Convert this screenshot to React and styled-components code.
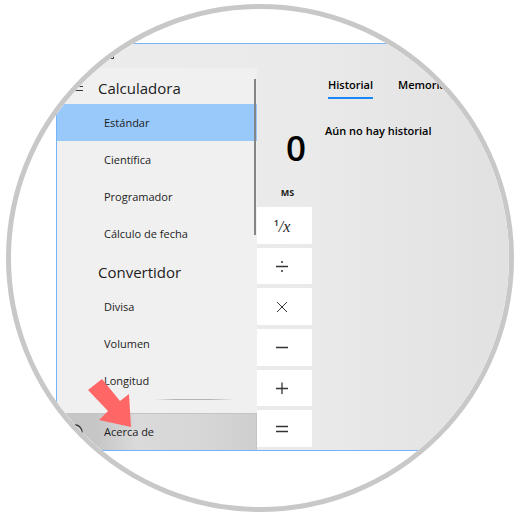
import React from 'react'
import styled, { createGlobalStyle } from 'styled-components'

const colors = {
  text: '#1c1c1c',
  dark: '#000000',
  accent: '#1a86f8',
  selected: '#99c9fb',
  outline: '#74b5f8',
  ring: '#c8c8c8',
  panel: '#f0f0f0',
  arrow: '#ff6666',
}

const GlobalStyle = createGlobalStyle`
  * { box-sizing: border-box; }
  body { margin: 0; background: #ffffff; }
  button { border: 0; margin: 0; padding: 0; background: none; font: inherit; color: inherit; }
  svg { display: block; }
`

const Page = styled.main`
  padding: 4px 6px;
  font-family: 'Open Sans', 'Noto Sans', sans-serif;
  font-size: 11px;
  line-height: 16px;
  color: ${colors.text};
`

const Lens = styled.div`
  width: 100%;
  aspect-ratio: 1;
  padding: 34px 0 0 45px;
  border: 5px solid ${colors.ring};
  border-radius: 50%;
  overflow: hidden;
`

const Window = styled.div`
  display: flex;
  flex-direction: column;
  border: 1px solid ${colors.outline};
  border-right: 0;
  background: linear-gradient(90deg, #ececec 0%, #eaeaea 55%, #e1e1e1 100%);
`

const TitleBar = styled.header`
  height: 24px;
  padding: 4px 0 0 46px;
`

const Body = styled.div`
  display: flex;
`

const Sidebar = styled.nav`
  position: relative;
  display: flex;
  flex-direction: column;
  flex: 0 0 200px;
  background: ${colors.panel};
`

const Modes = styled.div`
  flex: 1;
`

const Heading = styled.h2`
  display: flex;
  align-items: center;
  height: 36px;
  margin: 0;
  padding-top: 4px;
  font-size: 15px;
  font-weight: 400;
  line-height: 20px;
`

const IconSlot = styled.span`
  display: flex;
  justify-content: center;
  width: 41px;
`

const Mode = styled.button`
  display: block;
  width: 100%;
  height: 37px;
  padding-left: 47px;
  text-align: left;
  background: ${p => (p.$active ? colors.selected : 'transparent')};
`

const ScrollBar = styled.div`
  position: absolute;
  top: 11px;
  right: 1px;
  width: 2px;
  height: 156px;
  background: #858585;
`

const Divider = styled.div`
  width: 80px;
  height: 1px;
  margin: 0 22px 13px auto;
  background: linear-gradient(90deg, transparent, #b4b4b4 25%, #b4b4b4 70%, transparent);
`

const About = styled.button`
  display: flex;
  align-items: center;
  height: 37px;
  border-top: 1px solid #c4c4c4;
  border-right: 1px solid #c4c4c4;
  background: linear-gradient(90deg, #c6c6c6 20%, #dadada 40%, #d6d6d6 75%, #cecece);
`

const AboutIcon = styled.span`
  display: flex;
  justify-content: center;
  width: 47px;
  padding-right: 11px;
`

const Pointer = styled.svg`
  position: absolute;
  left: 30px;
  bottom: 22px;
  width: 46px;
  height: 50px;
  pointer-events: none;
`

const Keypad = styled.section`
  display: flex;
  flex-direction: column;
  flex: 0 0 55px;
  padding-bottom: 3px;
`

const Display = styled.output`
  display: flex;
  align-items: flex-end;
  justify-content: flex-end;
  height: 105px;
  padding-right: 6px;
  font-size: 35px;
  font-weight: 600;
  line-height: 50px;
  color: ${colors.dark};
`

const MemoryKey = styled.button`
  height: 34px;
  padding: 6px 0 0 6px;
  font-size: 9px;
  font-weight: 700;
`

const Keys = styled.div`
  display: flex;
  flex: 1;
  flex-direction: column;
  gap: 4px;
`

const Key = styled.button`
  display: flex;
  flex: 1;
  align-items: center;
  justify-content: center;
  padding-right: 5px;
  background: #ffffff;
`

const Fraction = styled.span`
  padding-top: 3px;
  font-family: 'Liberation Serif', serif;
  font-size: 16px;
  font-style: italic;
  sup { font-family: 'Open Sans', sans-serif; font-size: 9px; font-style: normal; font-weight: 600; line-height: 0; }
`

const History = styled.section`
  flex: 1;
  padding: 9px 0 0 13px;
  font-weight: 600;
  color: ${colors.dark};
`

const Tabs = styled.div`
  display: flex;
  gap: 25px;
  padding-left: 3px;
`

const Tab = styled.button`
  padding-bottom: 4px;
  border-bottom: 2px solid ${p => (p.$active ? colors.accent : 'transparent')};
`

const Empty = styled.p`
  margin: 24px 0 0;
  white-space: nowrap;
`

const Stroke = ({ d, size = 12, width = 1 }) => (
  <svg width={size} height={size} viewBox={`0 0 ${size} ${size}`} fill='none' stroke='#333333' strokeWidth={width} aria-hidden='true'>
    <path d={d} />
  </svg>
)

const standard = ['Estándar', 'Científica', 'Programador', 'Cálculo de fecha']
const converters = ['Divisa', 'Volumen', 'Longitud']

const operators = [
  { name: 'Dividir', d: 'M0 6.5H12M5 2H7M5 11H7' },
  { name: 'Multiplicar', d: 'M1 1L11 11M11 1L1 11' },
  { name: 'Restar', d: 'M0 6.5H12' },
  { name: 'Sumar', d: 'M0 6.5H12M6 0.5V12' },
  { name: 'Igual', d: 'M0 3.5H12M0 8.5H12' },
]

const App = () => {
  return (
    <Page>
      <GlobalStyle />
      <Lens>
        <Window>
          <TitleBar>
            <Stroke d='M1.5 1.5H10.5V10.5H1.5Z' />
          </TitleBar>
          <Body>
            <Sidebar>
              <Modes>
                <Heading>
                  <IconSlot><Stroke d='M0 0.5H11M0 4.5H11M0 8.5H11' /></IconSlot>
                  Calculadora
                </Heading>
                {standard.map((name, i) => <Mode key={name} $active={i === 0}>{name}</Mode>)}
                <Heading><IconSlot />Convertidor</Heading>
                {converters.map(name => <Mode key={name}>{name}</Mode>)}
              </Modes>
              <Divider />
              <About>
                <AboutIcon><Stroke size={16} width={1.3} d='M8 1A7 7 0 1 1 7.9 1M8 7V12M8 4V5.5' /></AboutIcon>
                Acerca de
              </About>
              <ScrollBar />
              <Pointer viewBox='0 0 46 50' aria-hidden='true'>
                <path d='M1 12L15 1L33 23L42 16L44 49L12 42L21 33Z' fill={colors.arrow} />
              </Pointer>
            </Sidebar>
            <Keypad>
              <Display>0</Display>
              <MemoryKey>MS</MemoryKey>
              <Keys>
                <Key><Fraction><sup>1</sup>/x</Fraction></Key>
                {operators.map(({ name, d }) => <Key key={name} aria-label={name}><Stroke d={d} width={name === 'Multiplicar' ? 1 : 1.3} /></Key>)}
              </Keys>
            </Keypad>
            <History>
              <Tabs>
                <Tab $active>Historial</Tab>
                <Tab>Memoria</Tab>
              </Tabs>
              <Empty>Aún no hay historial</Empty>
            </History>
          </Body>
        </Window>
      </Lens>
    </Page>
  )
}

export default App
